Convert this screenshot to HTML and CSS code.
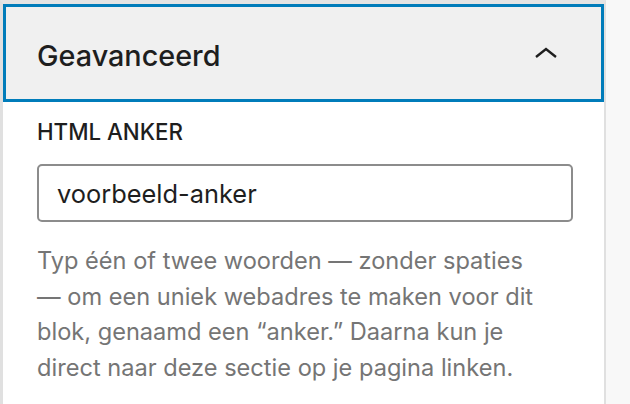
FILE: index.html
```html
<!DOCTYPE html>
<html lang="nl">
<head>
<meta charset="utf-8">
<link rel="stylesheet" href="styles.css">
</head>
<body>
<div class="sidebar">
  <div class="panel">
    <button class="panel-toggle" type="button">
      <span class="panel-title">Geavanceerd</span>
      <svg class="chevron" width="24" height="14" viewBox="0 0 24 14" aria-hidden="true">
        <polyline points="2,11 12,3 22,11" fill="none" stroke="#1e1e1e" stroke-width="2.4" stroke-linecap="butt"/>
      </svg>
    </button>
    <div class="panel-body">
      <label class="field-label" for="anchor">HTML ANKER</label>
      <input class="field-input" id="anchor" type="text" value="voorbeeld-anker">
      <p class="field-help">Typ één of twee woorden — zonder spaties — om een uniek webadres te maken voor dit blok, genaamd een “anker.” Daarna kun je direct naar deze sectie op je pagina linken.</p>
    </div>
  </div>
</div>
</body>
</html>
```

FILE: styles.css
```css
html, body {
  margin: 0;
  padding: 0;
  height: 100%;
}
body {
  background: #f8f8f8;
  font-family: Inter, "Noto Sans", sans-serif;
  overflow: hidden;
}
.sidebar {
  width: 606px;
  height: 100%;
  box-sizing: border-box;
  background: #fff;
  border-left: 3px solid #e0e0e0;
  border-right: 2px solid #e0e0e0;
  border-top: 4px solid #e4e4e4;
}
.panel-toggle {
  display: flex;
  align-items: center;
  justify-content: space-between;
  width: 100%;
  height: 98px;
  box-sizing: border-box;
  margin: 0;
  padding: 0 43px 0 31px;
  background: #f0f0f0;
  border: 3px solid #007cba;
  font: inherit;
  cursor: pointer;
}
.panel-title {
  margin-top: 5px;
  font-size: 28.8px;
  font-weight: 500;
  color: #1e1e1e;
}
.chevron {
  display: block;
}
.panel-body {
  padding: 18px 31px 0 34px;
  display: flex;
  flex-direction: column;
  align-items: flex-start;
}
.field-label {
  font-size: 22.3px;
  font-weight: 500;
  line-height: 24px;
  color: #1e1e1e;
  text-transform: uppercase;
}
.field-input {
  margin-top: 20px;
  width: 536px;
  height: 58px;
  box-sizing: border-box;
  padding: 0 18px;
  border: 2px solid #8c8c8c;
  border-radius: 5px;
  font-family: inherit;
  font-size: 25.4px;
  color: #1e1e1e;
  background: #fff;
}
.field-help {
  margin: 21px 0 0;
  width: 505px;
  font-size: 23.6px;
  line-height: 35.5px;
  color: #757575;
}
```
